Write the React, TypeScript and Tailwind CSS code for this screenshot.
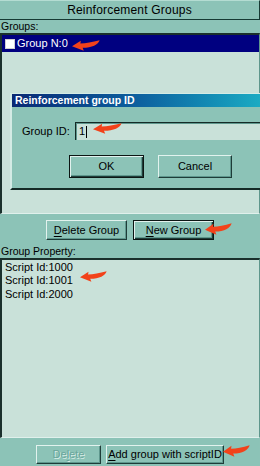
import React from "react";

const sans = "font-['Liberation_Sans',Arial,sans-serif]";

const Arrow = ({ className }: { className: string }) => (
  <svg viewBox="0 0 28 11" preserveAspectRatio="none" className={`absolute ${className}`}>
    <path
      d="M0 6.2 L8.8 0.8 L8.4 3.4 C14 3.2 20 2.2 27.6 0.2 C26.4 4.6 20 7.8 10.6 7.8 L11.8 10.8 Z"
      fill="#f2421a"
    />
  </svg>
);

const Btn = ({
  children,
  isDefault,
  disabled,
  className = "",
}: {
  children: React.ReactNode;
  isDefault?: boolean;
  disabled?: boolean;
  className?: string;
}) => {
  const frame = isDefault
    ? "border border-[#0c1614] shadow-[inset_1px_1px_0_#e2f2ee,inset_-1px_-1px_0_#1e3c38,inset_-2px_-2px_0_#5e978d]"
    : "border border-t-[#e2f2ee] border-l-[#e2f2ee] border-r-[#1e3c38] border-b-[#1e3c38] shadow-[inset_-1px_-1px_0_#5e978d]";
  return (
    <div
      className={`flex items-center justify-center whitespace-nowrap bg-[#8cc3b7] text-[11px] leading-none ${sans} ${frame} ${
        disabled ? "text-[#6aa69b] [text-shadow:1px_1px_0_#d6ebe5]" : "text-black"
      } ${className}`}
    >
      {children}
    </div>
  );
};

export default function App() {
  return (
    <div className={`relative w-[260px] h-[466px] overflow-hidden bg-[#8cc3b7] text-black flex flex-col ${sans}`}>
      {/* header */}
      <div className="h-[20px] shrink-0 border-b border-r border-[#163a34] border-t border-t-[#b4dcd2] flex items-center justify-center text-[12px] tracking-[0.2px]">
        Reinforcement Groups
      </div>

      <div className="h-[13px] shrink-0 pl-[1px] text-[10.5px] leading-[13px]">Groups:</div>

      {/* groups list */}
      <div className="relative h-[181px] shrink-0 bg-[#c9e1d9] border-t-2 border-l-2 border-t-[#1a302c] border-l-[#1a302c] border-r border-b border-r-[#5f968c] border-b-[#e0f0ec]">
        <div className="h-[17px] bg-[#000080] flex items-center text-white">
          <div className="w-[10px] h-[10px] ml-[3px] bg-white border border-[#d0d0d0]" />
          <span className="ml-[2px] text-[11px] leading-none">Group N:0</span>
        </div>

        {/* dialog */}
        <div className="absolute left-[8px] top-[58px] w-[262px] h-[97px] flex flex-col bg-[#8cc3b7] border-t border-l-2 border-t-[#d4ebe5] border-l-[#d4ebe5] border-b-2 border-b-[#142a26]">
          <div className="h-[13px] shrink-0 bg-gradient-to-r from-[#0a2874] via-[#0e62a0] to-[#1eb2c6] flex items-center pl-[3px] text-white text-[10.5px] font-bold leading-none">
            Reinforcement group ID
          </div>
          <div className="flex items-center mt-[15px] h-[18px]">
            <span className="w-[63px] pl-[10px] whitespace-nowrap text-[11px] leading-none">Group ID:</span>
            <div className="flex-1 h-[18px] bg-[#c9e1d9] border-t border-l border-t-[#142a26] border-l-[#142a26] shadow-[inset_1px_1px_0_#5e978d] flex items-center pl-[3px]">
              <span className="text-[11px] leading-none">1</span>
              <span className="w-px h-[12px] bg-black ml-[1px]" />
            </div>
          </div>
          <div className="flex mt-[15px] pl-[57px] gap-[14px]">
            <Btn isDefault className="w-[75px] h-[23px]">
              OK
            </Btn>
            <Btn className="w-[74px] h-[23px]">Cancel</Btn>
          </div>
        </div>
      </div>

      <div className="flex justify-center gap-[6px] mt-[6px] h-[20px] shrink-0">
        <Btn className="w-[81px] h-[20px]">
          <span>
            <span className="underline underline-offset-2">D</span>elete Group
          </span>
        </Btn>
        <Btn isDefault className="w-[81px] h-[20px]">
          <span>
            <span className="underline underline-offset-2">N</span>ew Group
          </span>
        </Btn>
      </div>

      <div className="h-[18px] shrink-0 pl-[1px] pt-[5px] text-[10.5px] leading-[13px]">Group Property:</div>

      {/* property list */}
      <div className="h-[180px] shrink-0 bg-[#c9e1d9] border-t-2 border-l-2 border-t-[#1a302c] border-l-[#1a302c] border-r border-b border-r-[#5f968c] border-b-[#e0f0ec] pt-[1px] pl-[3px] text-[11px] leading-[13.3px]">
        <div>Script Id:1000</div>
        <div>Script Id:1001</div>
        <div>Script Id:2000</div>
      </div>

      <div className="flex justify-center gap-[5px] mt-[7px] h-[19px] shrink-0">
        <Btn disabled className="w-[65px] h-[19px]">
          <span>
            De<span className="underline underline-offset-2">l</span>ete
          </span>
        </Btn>
        <Btn className="w-[118px] h-[19px]">
          <span>
            <span className="underline underline-offset-2">A</span>dd group with scriptID
          </span>
        </Btn>
      </div>

      {/* annotation arrows */}
      <Arrow className="left-[72px] top-[40px] w-[28px] h-[11px]" />
      <Arrow className="left-[93px] top-[123px] w-[29px] h-[11px]" />
      <Arrow className="left-[205px] top-[223px] w-[27px] h-[12px]" />
      <Arrow className="left-[80px] top-[271px] w-[27px] h-[11px]" />
      <Arrow className="left-[223px] top-[445px] w-[27px] h-[12px]" />
    </div>
  );
}
